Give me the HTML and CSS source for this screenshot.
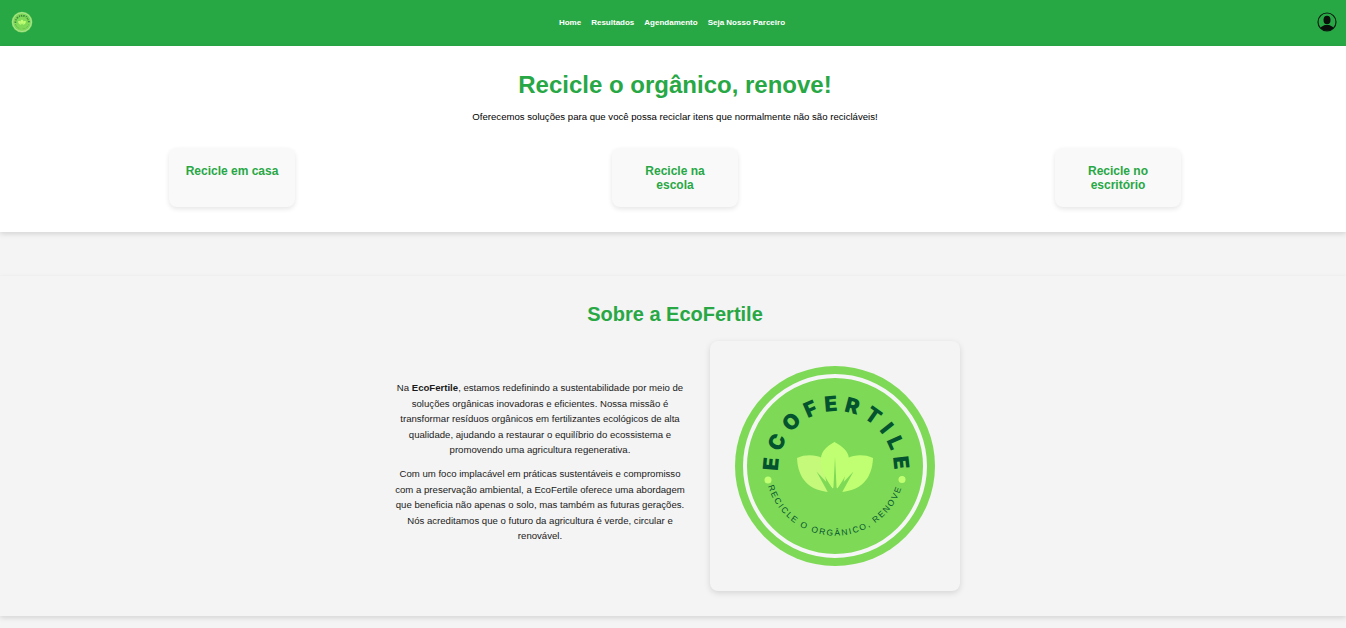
FILE: index.html
```html
<!DOCTYPE html>
<html lang="pt-BR">
<head>
<meta charset="utf-8">
<title>EcoFertile</title>
<link rel="stylesheet" href="styles.css">
</head>
<body>
<svg class="defs" width="0" height="0" aria-hidden="true">
  <defs>
    <symbol id="logo" viewBox="0 0 250 250">
      <circle cx="125" cy="126" r="100" fill="#7ed957"/>
      <circle cx="125" cy="126" r="90" fill="none" stroke="#f6f6f6" stroke-width="4"/>
      <path d="M87 118 C96 114 106 115 112 118 L118 152 C100 150 88 140 87 118Z" fill="#c4f97a"/>
      <path d="M163 118 C154 114 144 115 138 118 L132 152 C150 150 162 140 163 118Z" fill="#c1ff72"/>
      <path d="M124.500 102 C115 107 110 113 111 122 C111.500 132 116 139 125 152 C134 139 138.500 132 139 122 C140 113 134 107 124.500 102Z" fill="#c1ff72"/>
      <path d="M106.500 131.500 L122 148 L123 152.500 L118 152.500Z M143.500 131.500 L128 148 L127 152.500 L132 152.500Z M125 117 L123.400 148 L126.600 148Z M125 146 L118 152.500 L132 152.500Z" fill="#7ed957"/>
      <path id="arcTop" d="M68 131 A58 59 0 1 1 183 141" fill="none"/>
      <path id="arcBottom" d="M58 146 A70 70 0 0 0 192 146" fill="none"/>
      <text class="logo-main"><textPath href="#arcTop" textLength="184" lengthAdjust="spacing">ECOFERTILE</textPath></text>
      <text class="logo-sub"><textPath href="#arcBottom" textLength="176" lengthAdjust="spacing">RECICLE O ORGÂNICO, RENOVE</textPath></text>
      <circle cx="58" cy="140" r="3.5" fill="#c1ff72"/>
      <circle cx="192" cy="139.500" r="3.5" fill="#c1ff72"/>
    </symbol>
  </defs>
</svg>

<header class="topbar">
  <a class="brand" href="#"><svg class="brand-logo"><use href="#logo"/></svg></a>
  <nav class="nav">
    <a href="#">Home</a>
    <a href="#">Resultados</a>
    <a href="#">Agendamento</a>
    <a href="#">Seja Nosso Parceiro</a>
  </nav>
  <a class="user" href="#">
    <svg viewBox="0 0 20 20" width="20" height="20">
      <defs><clipPath id="userClip"><circle cx="10" cy="10" r="8.800"/></clipPath></defs>
      <circle cx="10" cy="10" r="9" fill="#28a745" stroke="#0d1f12" stroke-width="1.200"/>
      <g clip-path="url(#userClip)" fill="#0a0f0b">
        <ellipse cx="10" cy="8" rx="3.500" ry="4.300"/>
        <path d="M2 20 C2 15 6 14 8 13 L12 13 C14 14 18 15 18 20Z"/>
      </g>
    </svg>
  </a>
</header>

<section class="hero">
  <h1>Recicle o orgânico, renove!</h1>
  <p class="lead">Oferecemos soluções para que você possa reciclar itens que normalmente não são recicláveis!</p>
  <div class="cards">
    <a class="card" href="#">Recicle em casa</a>
    <a class="card" href="#">Recicle na escola</a>
    <a class="card" href="#">Recicle no escritório</a>
  </div>
</section>

<section class="about">
  <h2>Sobre a EcoFertile</h2>
  <div class="about-row">
    <div class="about-text">
      <p>Na <strong>EcoFertile</strong>, estamos redefinindo a sustentabilidade por meio de soluções orgânicas inovadoras e eficientes. Nossa missão é transformar resíduos orgânicos em fertilizantes ecológicos de alta qualidade, ajudando a restaurar o equilíbrio do ecossistema e promovendo uma agricultura regenerativa.</p>
      <p>Com um foco implacável em práticas sustentáveis e compromisso com a preservação ambiental, a EcoFertile oferece uma abordagem que beneficia não apenas o solo, mas também as futuras gerações. Nós acreditamos que o futuro da agricultura é verde, circular e renovável.</p>
    </div>
    <div class="about-image"><svg class="about-logo"><use href="#logo"/></svg></div>
  </div>
</section>
</body>
</html>
```

FILE: styles.css
```css
* { box-sizing: border-box; }
html, body { margin: 0; height: 100%; }
body {
  background: #f4f4f4;
  font-family: "Liberation Sans", Arial, sans-serif;
  color: #000;
  overflow: hidden;
}
a { text-decoration: none; }
.defs { position: absolute; }

.topbar {
  height: 46px;
  background: #28a745;
  display: grid;
  grid-template-columns: 1fr auto 1fr;
  align-items: center;
  padding: 0 9px 3px 7px;
}
.brand { display: flex; }
.brand-logo { width: 26px; height: 26px; margin-left: 2px; }
.nav { display: flex; gap: 10px; padding-top: 1px; }
.nav a { color: #fff; font-size: 8px; font-weight: 700; }
.user { justify-self: end; display: flex; }

.hero {
  height: 186px;
  background: #fff;
  padding: 25px 6.5px 0 10.5px;
  text-align: center;
  box-shadow: 0 2px 5px rgba(0, 0, 0, .13);
  position: relative;
}
.hero h1 {
  margin: 0;
  color: #28a745;
  font-size: 24px;
  line-height: 28px;
  font-weight: 700;
}
.lead {
  margin: 12px 0 0;
  font-size: 9.6px;
  line-height: 12px;
}
.cards {
  margin-top: 25px;
  display: flex;
  justify-content: space-around;
}
.card {
  width: 126px;
  height: 59px;
  padding: 16px 14px 0;
  background: #f9f9f9;
  border-radius: 8px;
  box-shadow: 0 2px 5px rgba(0, 0, 0, .1);
  color: #28a745;
  font-size: 12px;
  line-height: 14px;
  font-weight: 700;
  text-align: center;
}

.about {
  margin-top: 44px;
  height: 340px;
  background: #f4f4f4;
  box-shadow: 0 2px 5px rgba(0, 0, 0, .13);
  padding: 27px 0 0 4px;
  text-align: center;
}
.about h2 {
  margin: 0;
  color: #28a745;
  font-size: 20px;
  line-height: 23px;
  font-weight: 700;
}
.about-row {
  margin-top: 15px;
  display: flex;
  justify-content: center;
  align-items: center;
  gap: 20px;
}
.about-text {
  width: 300px;
  font-size: 9.6px;
  line-height: 15.6px;
  color: #1a1a1a;
}
.about-text p { margin: 0 0 8px; }
.about-image {
  width: 250px;
  height: 250px;
  background: #f4f4f4;
  border-radius: 8px;
  box-shadow: 0 2px 6px rgba(0, 0, 0, .13);
  display: flex;
}
.about-logo { width: 250px; height: 250px; margin-top: -1px; }

.logo-main {
  font-family: Inter, "Liberation Sans", sans-serif;
  font-weight: 900;
  font-size: 21px;
  fill: #04532f;
}
.logo-sub {
  font-family: "Liberation Sans", sans-serif;
  font-size: 8.5px;
  fill: #04532f;
}
```
